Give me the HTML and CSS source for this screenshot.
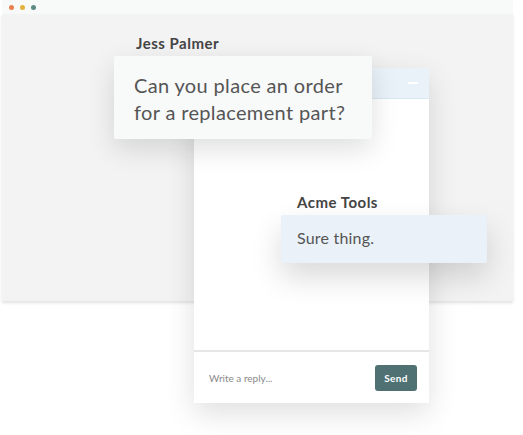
FILE: index.html
```html
<!DOCTYPE html>
<html lang="en">
<head>
    <meta charset="UTF-8">
    <title>Chat</title>
    <link rel="stylesheet" href="styles.css">
</head>
<body>
    <div class="scene">
        <div class="browser">
            <div class="browser-bar">
                <span class="dot dot-red"></span>
                <span class="dot dot-yellow"></span>
                <span class="dot dot-green"></span>
            </div>
            <div class="browser-body"></div>
        </div>

        <div class="chat">
            <div class="chat-head">
                <span class="minimize"></span>
            </div>
            <div class="chat-body"></div>
            <div class="chat-foot">
                <span class="reply">Write a reply...</span>
                <button class="send">Send</button>
            </div>
        </div>

        <div class="msg msg-jess">
            <div class="author">Jess Palmer</div>
            <div class="bubble bubble-q">Can you place an order<br>for a replacement part?</div>
        </div>

        <div class="msg msg-acme">
            <div class="author">Acme Tools</div>
            <div class="bubble bubble-a">Sure thing.</div>
        </div>
    </div>
</body>
</html>
```

FILE: styles.css
```css
body {
    margin: 0;
    background: #fff;
    font-family: "Lato", "Open Sans", sans-serif;
}

.scene {
    position: relative;
    width: 523px;
    height: 435px;
}

.browser {
    margin-left: 2px;
    width: 511px;
}

.browser-bar {
    height: 14px;
    background: #f8f9f9;
    display: flex;
    align-items: center;
    gap: 6px;
    padding-left: 7px;
}

.dot {
    width: 5px;
    height: 5px;
    border-radius: 50%;
}

.dot-red { background: #e9804f; }
.dot-yellow { background: #e3b33a; }
.dot-green { background: #5e8a83; }

.browser-body {
    height: 287px;
    background: #f3f3f3;
    box-shadow: 0 2px 3px rgba(0, 0, 0, 0.12);
}

.chat {
    position: absolute;
    left: 194px;
    top: 68px;
    width: 235px;
    height: 335px;
    background: #fff;
    display: flex;
    flex-direction: column;
    box-shadow: 0 10px 28px rgba(0, 0, 0, 0.13);
}

.chat-head {
    height: 30px;
    background: #e9f1f9;
    border-bottom: 1px solid #d6e8f0;
    display: flex;
    align-items: center;
    justify-content: flex-end;
    padding-right: 11px;
}

.minimize {
    width: 10px;
    height: 2px;
    background: #fff;
}

.chat-body {
    flex: 1;
}

.chat-foot {
    height: 51px;
    border-top: 2px solid #e6e6e6;
    display: flex;
    align-items: center;
    justify-content: space-between;
    padding: 0 12px 0 15px;
}

.reply {
    font-size: 10px;
    color: #8a8a8a;
}

.send {
    border: none;
    border-radius: 3px;
    background: #4f7173;
    color: #fff;
    font-family: inherit;
    font-size: 10px;
    font-weight: bold;
    letter-spacing: 0.4px;
    width: 42px;
    height: 26px;
    padding: 0;
}

.msg {
    position: absolute;
}

.author {
    font-size: 15px;
    font-weight: bold;
    color: #444;
    line-height: 17px;
    letter-spacing: 0.5px;
}

.bubble {
    color: #555;
    border-radius: 2px;
    white-space: nowrap;
}

.msg-jess {
    left: 114px;
    top: 35px;
}

.msg-jess .author {
    padding-left: 22px;
    margin-bottom: 4px;
}

.bubble-q {
    width: 258px;
    height: 83px;
    box-sizing: border-box;
    padding: 16px 20px;
    font-size: 20px;
    line-height: 27px;
    letter-spacing: 0.35px;
    background: #f8f9f9;
    box-shadow: 0 10px 28px rgba(0, 0, 0, 0.13);
}

.msg-acme {
    left: 281px;
    top: 194px;
}

.msg-acme .author {
    padding-left: 16px;
    margin-bottom: 4px;
}

.bubble-a {
    width: 206px;
    height: 48px;
    box-sizing: border-box;
    padding: 13px 16px;
    font-size: 16px;
    line-height: 20px;
    letter-spacing: 0.2px;
    background: #eaf1f8;
    box-shadow: 0 14px 30px rgba(0, 0, 0, 0.15);
}
```
